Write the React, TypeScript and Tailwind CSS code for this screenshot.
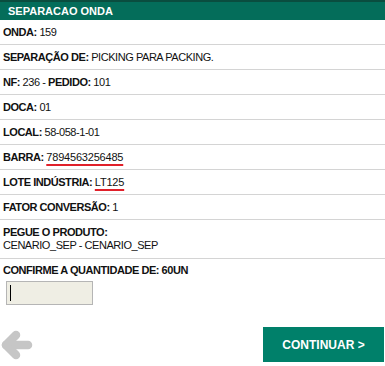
import React from 'react';

type Row = { label: string; value?: string; underline?: boolean };

const rows: Row[] = [
  { label: 'ONDA:', value: '159' },
  { label: 'SEPARAÇÃO DE:', value: 'PICKING PARA PACKING.' },
  { label: 'NF:', value: '236 - ' },
  { label: 'DOCA:', value: '01' },
  { label: 'LOCAL:', value: '58-058-1-01' },
  { label: 'BARRA:', value: '7894563256485', underline: true },
  { label: 'LOTE INDÚSTRIA:', value: 'LT125', underline: true },
  { label: 'FATOR CONVERSÃO:', value: '1' },
];

const Value = ({ text, underline }: { text: string; underline?: boolean }) =>
  underline ? (
    <span className="underline decoration-[#e0202a] decoration-2 underline-offset-[3px] tracking-[-0.2px]">{text}</span>
  ) : (
    <span>{text}</span>
  );

export default function App() {
  return (
    <div
      className="w-[385px] h-[366px] bg-white text-[11px] text-[#111] overflow-hidden flex flex-col"
      style={{ fontFamily: '"Liberation Sans", Arial, sans-serif' }}
    >
      {/* Header */}
      <div className="h-[20px] border-t-2 border-[#0a4d3f] bg-[#046d5a] text-white font-bold px-2 flex items-center">
        SEPARACAO ONDA
      </div>

      {rows.map((r, i) => (
        <div key={i} className="h-[25px] border-b border-[#d4d4d4] px-[3px] flex items-center tracking-[-0.45px] whitespace-pre">
          <span className="font-bold">{r.label} </span>
          {r.label === 'NF:' ? (
            <span>
              236 - <span className="font-bold">PEDIDO:</span> 101
            </span>
          ) : (
            <Value text={r.value ?? ''} underline={r.underline} />
          )}
        </div>
      ))}

      <div className="h-[39px] border-b border-[#d4d4d4] px-[3px] pt-[6px] leading-[13px] tracking-[-0.45px]">
        <div className="font-bold">PEGUE O PRODUTO:</div>
        <div>CENARIO_SEP - CENARIO_SEP</div>
      </div>

      <div className="px-[3px] pt-[5px] font-bold leading-[13px] tracking-[-0.45px]">CONFIRME A QUANTIDADE DE: 60UN</div>
      <div className="pl-[6px] pt-[4px]">
        <div className="relative w-[87px]">
          <input className="block w-[87px] h-[24px] bg-[#efeee4] border border-[#b5b5b5] outline-none px-1 text-[13px]" />
          {/* focused caret */}
          <span className="absolute left-[4px] top-[4px] w-px h-[16px] bg-black" />
        </div>
      </div>

      <div className="flex items-center justify-between mt-[22px]">
        <svg width="32" height="32" viewBox="0 0 32 32" className="ml-[1px]">
          <g stroke="#c6c6c6" strokeWidth="8.5" strokeLinecap="round" strokeLinejoin="round" fill="none">
            <line x1="5" y1="16" x2="27" y2="16" />
            <polyline points="15,6 5,16 15,26" />
          </g>
        </svg>
        <button className="w-[121px] h-[35px] mr-[1px] bg-[#00806a] text-white font-bold text-[12px]">
          CONTINUAR &gt;
        </button>
      </div>
    </div>
  );
}
